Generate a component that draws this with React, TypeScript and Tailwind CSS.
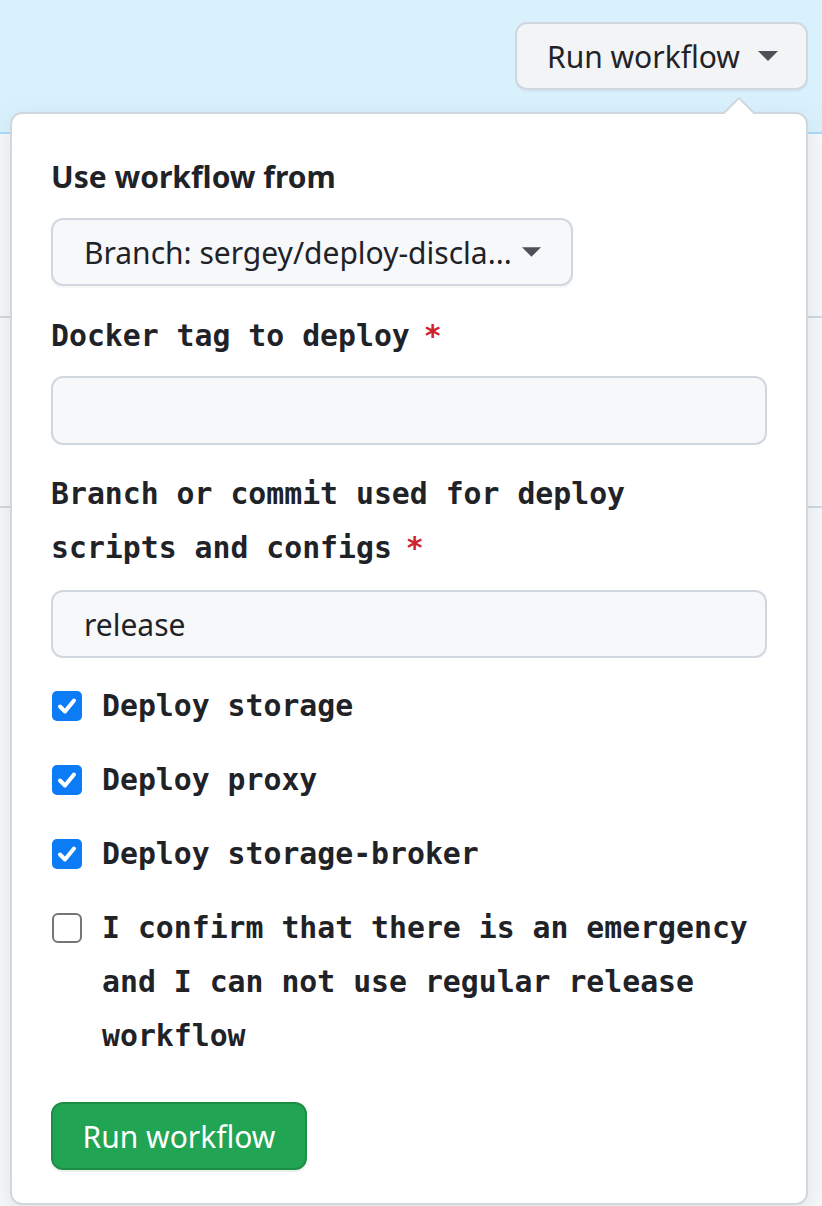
import React from "react";

function Caret({ w = 20, h = 10, color = "#4d5157" }: { w?: number; h?: number; color?: string }) {
  return (
    <svg width={w} height={h} viewBox="0 0 20 10" className="shrink-0">
      <polygon points="0,0 20,0 10,10" fill={color} />
    </svg>
  );
}

function CheckBox({ checked }: { checked: boolean }) {
  if (checked) {
    return (
      <div className="mt-[12px] flex h-[30px] w-[30px] shrink-0 items-center justify-center rounded-[5px] bg-[#0b7cf5]">
        <svg width="22" height="22" viewBox="0 0 22 22">
          <path d="M4 11.5 L9 16.5 L18 5.5" fill="none" stroke="#ffffff" strokeWidth="4" strokeLinecap="round" strokeLinejoin="round" />
        </svg>
      </div>
    );
  }
  return <div className="mt-[12px] h-[30px] w-[30px] shrink-0 rounded-[6px] border-2 border-[#767676] bg-white" />;
}

function CheckRow({ checked, children }: { checked: boolean; children: React.ReactNode }) {
  return (
    <div className="flex items-start gap-[20px] pl-[1px]">
      <CheckBox checked={checked} />
      <span className="font-['DejaVu_Sans_Mono',monospace] text-[29.8px] font-bold leading-[54px]">{children}</span>
    </div>
  );
}

function Label({ children }: { children: React.ReactNode }) {
  return (
    <div className="font-['DejaVu_Sans_Mono',monospace] text-[29.8px] font-bold leading-[54px]">
      {children}
      <span className="ml-[14px] text-[#cf222e]">*</span>
    </div>
  );
}

export default function App() {
  return (
    <div className="relative h-[1206px] w-[822px] overflow-hidden bg-[#f6f8fa] font-['Noto_Sans',sans-serif] text-[#1f2328]">
      <div className="flex h-[134px] items-start justify-end border-b-2 border-[#a8dafc] bg-[#d9f1fd] pr-[14px] pt-[22px]">
        <button className="flex h-[68px] w-[293px] items-center gap-[18px] rounded-[12px] border-2 border-[#d0d7de] bg-[#f3f4f6] pl-[30px] text-[30px] text-[#1f2328] shadow-[0_2px_0_rgba(31,35,40,0.04)]">
          <span>Run workflow</span>
          <Caret />
        </button>
      </div>
      <div className="h-[184px] border-b-2 border-[#d0d7de]" />
      <div className="h-[190px] border-b-2 border-[#d0d7de]" />

      <div className="absolute left-[10px] top-[112px] h-[1093px] w-[798px] rounded-[12px] border-2 border-[#d0d7de] bg-white pl-[39px] pr-[39px] pt-[36px] shadow-[0_8px_24px_rgba(140,149,159,0.2)]">
        <svg width="36" height="19" viewBox="0 0 36 19" className="absolute left-[709px] top-[-17px]">
          <polygon points="0,19 18,1 36,19" fill="#ffffff" />
          <polyline points="0,19 18,1 36,19" fill="none" stroke="#d0d7de" strokeWidth="2" />
          <rect x="0" y="17" width="36" height="2" fill="#ffffff" />
        </svg>

        <div className="text-[30px] font-bold leading-[54px]">Use workflow from</div>

        <button className="mt-[14px] flex h-[68px] w-[522px] items-center justify-between rounded-[12px] border-2 border-[#d0d7de] bg-[#f6f8fa] pl-[31px] pr-[30px] text-[30px] text-[#1f2328] shadow-[0_2px_0_rgba(31,35,40,0.04)]">
          <span className="whitespace-nowrap">Branch: sergey/deploy-discla...</span>
          <Caret w={19} h={10} />
        </button>

        <div className="mt-[23px]">
          <Label>Docker tag to deploy</Label>
        </div>
        <div className="mt-[13px] h-[69px] w-[716px] rounded-[12px] border-2 border-[#d0d7de] bg-[#f6f8fa]" />

        <div className="mt-[22px] w-[716px]">
          <Label>Branch or commit used for deploy scripts and configs</Label>
        </div>
        <div className="mt-[15px] flex h-[68px] w-[716px] items-center rounded-[12px] border-2 border-[#d0d7de] bg-[#f6f8fa] pl-[31px] text-[30px]">
          release
        </div>

        <div className="mt-[21px] flex w-[716px] flex-col gap-[20px]">
          <CheckRow checked>Deploy storage</CheckRow>
          <CheckRow checked>Deploy proxy</CheckRow>
          <CheckRow checked>Deploy storage-broker</CheckRow>
          <CheckRow checked={false}>I confirm that there is an emergency and I can not use regular release workflow</CheckRow>
        </div>

        <button className="mt-[39px] flex h-[68px] w-[256px] items-center justify-center rounded-[12px] border-2 border-[#1c8f47] bg-[#21a453] text-[30px] text-white shadow-[0_2px_0_rgba(31,35,40,0.08)]">
          Run workflow
        </button>
      </div>
    </div>
  );
}
